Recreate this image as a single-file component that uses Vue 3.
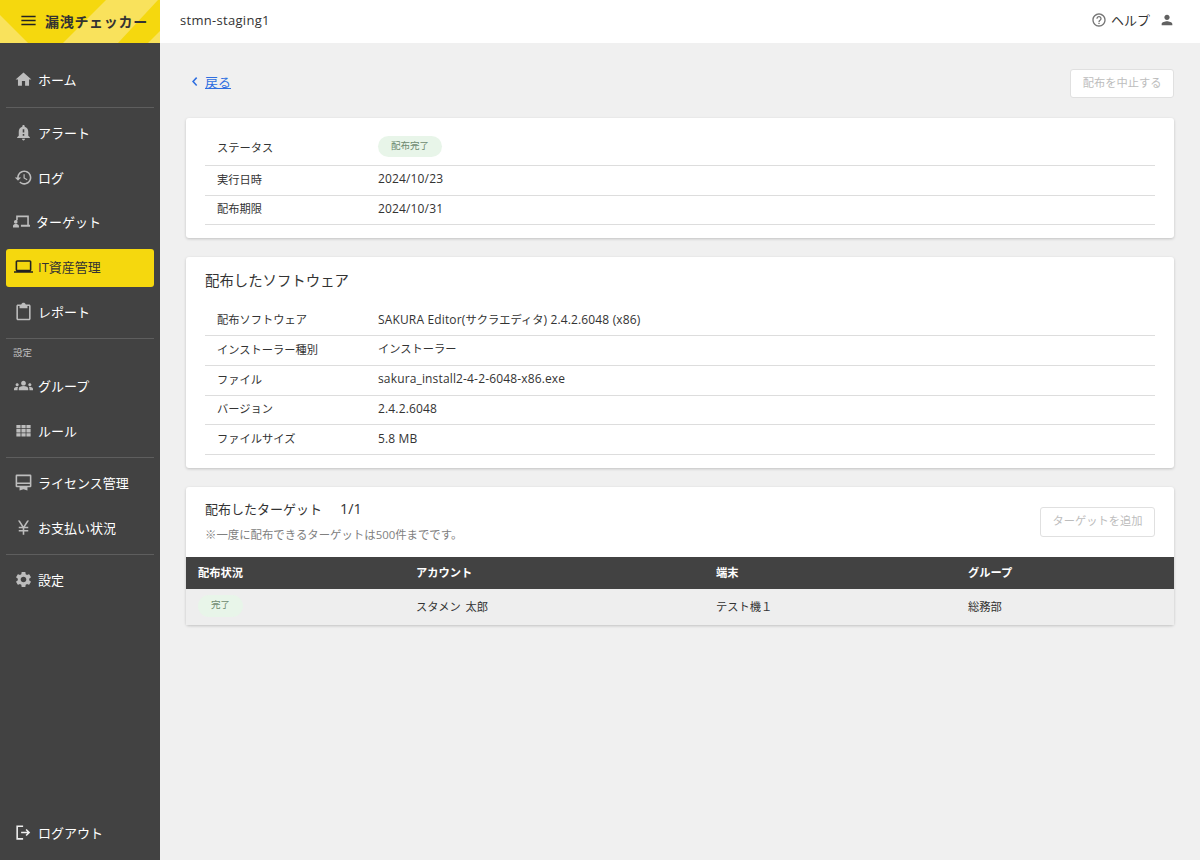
<template>
  <div class="layout">
    <aside class="sidebar">
      <div class="brand">
        <svg class="brand-bg" viewBox="0 0 160 43" preserveAspectRatio="none">
          <polygon points="0,15 28,43 0,43" fill="#f9e25c" />
          <polygon points="106,0 158,0 118,43 63,43" fill="#f9e25c" />
          <polygon points="160,31 160,43 148,43" fill="#f9e25c" />
        </svg>
        <svg class="brand-menu" viewBox="0 0 24 24"><path :d="icons.menu" /></svg>
        <span class="brand-name">漏洩チェッカー</span>
      </div>
      <nav class="nav">
        <div v-for="(group, i) in groups" :key="i" class="nav-group">
          <div v-if="group.title" class="nav-title">{{ group.title }}</div>
          <a
            v-for="item in group.items"
            :key="item.label"
            class="nav-item"
            :class="{ active: item.active, tight: item.icon === 'target' }"
          >
            <svg class="nav-icon" viewBox="0 0 24 24"><path :d="icons[item.icon]" /></svg>
            <span>{{ item.label }}</span>
          </a>
        </div>
      </nav>
      <a class="nav-item logout">
        <svg class="nav-icon" viewBox="0 0 24 24"><path :d="icons.logout" /></svg>
        <span>ログアウト</span>
      </a>
    </aside>

    <div class="body">
      <header class="topbar">
        <span class="tenant">stmn-staging1</span>
        <div class="top-right">
          <svg class="help-icon" viewBox="0 0 24 24"><path :d="icons.help" /></svg>
          <span class="help">ヘルプ</span>
          <svg class="user-icon" viewBox="0 0 24 24"><path :d="icons.person" /></svg>
        </div>
      </header>

      <main class="main">
        <div class="back-row">
          <a class="back">
            <svg viewBox="0 0 8 12"><path d="M7 1.5 5.5 0 0 6l5.5 6L7 10.5 2.8 6z" /></svg>
            <span>戻る</span>
          </a>
          <button class="btn" disabled>配布を中止する</button>
        </div>

        <section class="card">
          <div v-for="row in summary" :key="row.label" class="row" :class="{ tall: row.badge }">
            <div class="row-label">{{ row.label }}</div>
            <div class="row-value">
              <span v-if="row.badge" class="badge">{{ row.value }}</span>
              <template v-else>{{ row.value }}</template>
            </div>
          </div>
        </section>

        <section class="card">
          <h2 class="card-title">配布したソフトウェア</h2>
          <div v-for="row in software" :key="row.label" class="row">
            <div class="row-label">{{ row.label }}</div>
            <div class="row-value">
              <span v-for="(part, i) in splitText(row.value)" :key="i" :class="{ jp: i % 2 === 1 }">{{ part }}</span>
            </div>
          </div>
        </section>

        <section class="card card-target">
          <div class="target-head">
            <div>
              <h2 class="card-title target-title">配布したターゲット<span class="count">1/1</span></h2>
              <p class="note">※一度に配布できるターゲットは500件までです。</p>
            </div>
            <button class="btn btn-add" disabled>ターゲットを追加</button>
          </div>
          <table class="table">
            <thead>
              <tr>
                <th class="c1">配布状況</th>
                <th class="c2">アカウント</th>
                <th class="c3">端末</th>
                <th>グループ</th>
              </tr>
            </thead>
            <tbody>
              <tr>
                <td><span class="badge small">完了</span></td>
                <td>スタメン 太郎</td>
                <td>テスト機１</td>
                <td>総務部</td>
              </tr>
            </tbody>
          </table>
        </section>
      </main>
    </div>
  </div>
</template>

<script setup>
const icons = {
  menu: 'M3 18h18v-2H3v2zm0-5h18v-2H3v2zm0-7v2h18V6H3z',
  home: 'M10 20v-6h4v6h5v-8h3L12 3 2 12h3v8z',
  alert: 'M18 16v-5c0-3.07-1.64-5.64-4.5-6.32V4c0-.83-.67-1.5-1.5-1.5s-1.5.67-1.5 1.5v.68C7.63 5.36 6 7.92 6 11v5l-2 2v1h16v-1l-2-2zm-5 0h-2v-2h2v2zm0-4h-2V8h2v4zm-1 10c1.1 0 2-.9 2-2h-4c0 1.1.9 2 2 2z',
  history: 'M13 3c-4.97 0-9 4.03-9 9H1l3.89 3.89.07.14L9 12H6c0-3.87 3.13-7 7-7s7 3.13 7 7-3.13 7-7 7c-1.93 0-3.68-.79-4.94-2.06l-1.42 1.42C8.27 19.99 10.51 21 13 21c4.97 0 9-4.03 9-9s-4.03-9-9-9zm-1 5v5l4.28 2.54.72-1.21-3.5-2.08V8H12z',
  target: 'M4 4.5h16v11.5h1.5v2.5H10V16h8V6.5H6v4H4v-6zM3.5 10.2a2.3 2.3 0 1 1 0 4.6 2.3 2.3 0 0 1 0-4.6zM0 17.6c0-1.6 2-2.4 3.5-2.4S7.5 16 7.5 17.6v2H0v-2z',
  laptop: 'M20 18c1.1 0 1.99-.9 1.99-2L22 6c0-1.1-.9-2-2-2H4c-1.1 0-2 .9-2 2v10c0 1.1.9 2 2 2H0v2h24v-2h-4zM4 6h16v10H4V6z',
  report: 'M19 3h-4.18C14.4 1.84 13.3 1 12 1s-2.4.84-2.82 2H5c-1.1 0-2 .9-2 2v16c0 1.1.9 2 2 2h14c1.1 0 2-.9 2-2V5c0-1.1-.9-2-2-2zM19 21H5V5h2v3h10V5h2v16z',
  groups: 'M12 12.75c1.63 0 3.07.39 4.24.9 1.08.48 1.76 1.56 1.76 2.73V18H6v-1.61c0-1.18.68-2.26 1.76-2.73 1.17-.52 2.61-.91 4.24-.91zM4 13c1.1 0 2-.9 2-2s-.9-2-2-2-2 .9-2 2 .9 2 2 2zm1.13 1.1c-.37-.06-.74-.1-1.13-.1-.99 0-1.93.21-2.78.58C.48 14.9 0 15.62 0 16.43V18h4.5v-1.61c0-.83.23-1.61.63-2.29zM20 13c1.1 0 2-.9 2-2s-.9-2-2-2-2 .9-2 2 .9 2 2 2zm4 3.43c0-.81-.48-1.53-1.22-1.85-.85-.37-1.79-.58-2.78-.58-.39 0-.76.04-1.13.1.4.68.63 1.46.63 2.29V18H24v-1.57zM12 6c1.66 0 3 1.34 3 3s-1.34 3-3 3-3-1.34-3-3 1.34-3 3-3z',
  grid: 'M3 5h5.3v4.2H3zM9.4 5h5.3v4.2H9.4zM15.7 5H21v4.2h-5.3zM3 10.2h5.3v4.2H3zM9.4 10.2h5.3v4.2H9.4zM15.7 10.2H21v4.2h-5.3zM3 15.4h5.3v4.2H3zM9.4 15.4h5.3v4.2H9.4zM15.7 15.4H21v4.2h-5.3z',
  license: 'M3.5 2h17A1.5 1.5 0 0 1 22 3.5v13a1.5 1.5 0 0 1-1.5 1.5H17v4l-5-1.5L7 22v-4H3.5A1.5 1.5 0 0 1 2 16.5v-13A1.5 1.5 0 0 1 3.5 2zM4 4v8h16V4H4zm0 10v2h16v-2H4z',
  yen: 'M13.92 11H18v2h-5v2h5v2h-5v4h-2v-4H6v-2h5v-2H6v-2h4.08L5 3h2.37L12 10.29 16.63 3H19z',
  settings: 'M19.14 12.94c.04-.3.06-.61.06-.94 0-.32-.02-.64-.07-.94l2.03-1.58c.18-.14.23-.41.12-.61l-1.92-3.32c-.12-.22-.37-.29-.59-.22l-2.39.96c-.5-.38-1.03-.7-1.62-.94l-.36-2.54c-.04-.24-.24-.41-.48-.41h-3.84c-.24 0-.43.17-.47.41l-.36 2.54c-.59.24-1.13.57-1.62.94l-2.39-.96c-.22-.08-.47 0-.59.22L2.74 8.87c-.12.21-.08.47.12.61l2.03 1.58c-.05.3-.09.63-.09.94s.02.64.07.94l-2.03 1.58c-.18.14-.23.41-.12.61l1.92 3.32c.12.22.37.29.59.22l2.39-.96c.5.38 1.03.7 1.62.94l.36 2.54c.05.24.24.41.48.41h3.84c.24 0 .44-.17.47-.41l.36-2.54c.59-.24 1.13-.56 1.62-.94l2.39.96c.22.08.47 0 .59-.22l1.92-3.32c.12-.22.07-.47-.12-.61l-2.01-1.58zM12 15.6c-1.98 0-3.6-1.62-3.6-3.6s1.62-3.6 3.6-3.6 3.6 1.62 3.6 3.6-1.62 3.6-3.6 3.6z',
  logout: 'M3 3h8.5v2H5v14h6.5v2H3V3zM16 7.5l4.5 4.5-4.5 4.5-1.4-1.4 2.1-2.1H9v-2h7.7l-2.1-2.1L16 7.5z',
  help: 'M11 18h2v-2h-2v2zm1-16C6.48 2 2 6.48 2 12s4.48 10 10 10 10-4.48 10-10S17.52 2 12 2zm0 18c-4.41 0-8-3.59-8-8s3.59-8 8-8 8 3.59 8 8-3.59 8-8 8zm0-14c-2.21 0-4 1.79-4 4h2c0-1.1.9-2 2-2s2 .9 2 2c0 2-3 1.75-3 5h2c0-2.25 3-2.5 3-5 0-2.21-1.79-4-4-4z',
  person: 'M12 12c2.21 0 4-1.79 4-4s-1.79-4-4-4-4 1.79-4 4 1.79 4 4 4zm0 2c-2.67 0-8 1.34-8 4v2h16v-2c0-2.66-5.33-4-8-4z',
}

const groups = [
  { items: [{ label: 'ホーム', icon: 'home' }] },
  {
    items: [
      { label: 'アラート', icon: 'alert' },
      { label: 'ログ', icon: 'history' },
      { label: 'ターゲット', icon: 'target' },
      { label: 'IT資産管理', icon: 'laptop', active: true },
      { label: 'レポート', icon: 'report' },
    ],
  },
  {
    title: '設定',
    items: [
      { label: 'グループ', icon: 'groups' },
      { label: 'ルール', icon: 'grid' },
    ],
  },
  {
    items: [
      { label: 'ライセンス管理', icon: 'license' },
      { label: 'お支払い状況', icon: 'yen' },
    ],
  },
  { items: [{ label: '設定', icon: 'settings' }] },
]

const summary = [
  { label: 'ステータス', value: '配布完了', badge: true },
  { label: '実行日時', value: '2024/10/23' },
  { label: '配布期限', value: '2024/10/31' },
]

const software = [
  { label: '配布ソフトウェア', value: 'SAKURA Editor(サクラエディタ) 2.4.2.6048 (x86)' },
  { label: 'インストーラー種別', value: 'インストーラー' },
  { label: 'ファイル', value: 'sakura_install2-4-2-6048-x86.exe' },
  { label: 'バージョン', value: '2.4.2.6048' },
  { label: 'ファイルサイズ', value: '5.8 MB' },
]

// odd parts are the Japanese runs, they are set a little smaller than latin
function splitText(text) {
  return text.split(/([\u3000-\u30ff\u4e00-\u9fff]+)/)
}
</script>

<style>
html,
body {
  margin: 0;
  background: #f0f0f0;
}
</style>

<style scoped>
.layout {
  display: flex;
  height: 860px;
  font-family: "Open Sans", "Noto Sans CJK JP", sans-serif;
  font-size: 12px;
  color: #333;
  overflow: hidden;
}
.sidebar {
  width: 160px;
  flex-shrink: 0;
  display: flex;
  flex-direction: column;
  background: #424242;
  color: #fff;
}
.brand {
  position: relative;
  height: 43px;
  box-sizing: border-box;
  display: flex;
  align-items: center;
  padding: 0 0 2px 19px;
  background: #f5d80e;
  color: #333;
}
.brand-bg {
  position: absolute;
  inset: 0;
  width: 100%;
  height: 100%;
}
.brand-menu {
  position: relative;
  width: 19px;
  height: 19px;
  fill: #222;
  margin-right: 7px;
}
.brand-name {
  position: relative;
  font-size: 14px;
  font-weight: 700;
  letter-spacing: 0.7px;
}
.nav {
  padding-top: 11.75px;
}
.nav-group {
  margin: 0 6px;
  padding-top: 6.25px;
  border-bottom: 1px solid #5e5e5e;
}
.nav-group:first-child {
  padding-bottom: 1.25px;
}
.nav-group:last-child {
  border-bottom: 0;
}
.nav-title {
  margin: 1px 0 7.5px 7px;
  font-size: 9.5px;
  line-height: 14px;
  color: #bdbdbd;
}
.nav-item {
  height: 38px;
  box-sizing: border-box;
  margin-bottom: 6.75px;
  display: flex;
  align-items: center;
  gap: 5.5px;
  padding: 0 0 2px 7.5px;
  border-radius: 3px;
  font-size: 13px;
  color: #fff;
}
.nav-item.tight {
  gap: 4px;
  padding-left: 7px;
}
.nav-icon {
  width: 19px;
  height: 19px;
  fill: #bdbdbd;
  flex-shrink: 0;
}
.nav-item.active {
  background: #f5d80e;
  color: #333;
}
.nav-item.active .nav-icon {
  fill: #222;
}
.logout {
  margin: auto 6px 8px;
}
.logout .nav-icon {
  fill: #eee;
}
.body {
  flex: 1;
  min-width: 0;
  display: flex;
  flex-direction: column;
  background: #f0f0f0;
}
.topbar {
  height: 43px;
  flex-shrink: 0;
  background: #fff;
  display: flex;
  align-items: center;
  justify-content: space-between;
  padding: 0 25px 3px 20px;
  box-sizing: border-box;
}
.tenant {
  font-size: 13px;
  letter-spacing: 0.3px;
}
.top-right {
  display: flex;
  align-items: center;
}
.help-icon {
  width: 16px;
  height: 16px;
  fill: #757575;
  margin-right: 4px;
}
.help {
  font-size: 13px;
  margin: 0 9px 2px 0;
}
.user-icon {
  width: 16px;
  height: 16px;
  fill: #616161;
}
.main {
  padding: 26px 26px 0;
}
.back-row {
  display: flex;
  align-items: center;
  justify-content: space-between;
  margin-bottom: 20px;
}
.back {
  display: flex;
  align-items: center;
  padding-bottom: 5px;
  color: #2f6fe0;
  font-size: 13px;
}
.back svg {
  width: 6px;
  height: 9px;
  fill: #2f6fe0;
  margin: 1px 7px 0 6px;
}
.back span {
  text-decoration: underline;
}
.btn {
  height: 29px;
  padding: 0 11.5px 3px;
  border: 1px solid #e0e0e0;
  border-radius: 3px;
  background: #fff;
  color: #bdbdbd;
  font: inherit;
  font-size: 11.25px;
}
.btn-add {
  height: 30px;
  margin-top: 8px;
}
.card {
  background: #fff;
  border-radius: 3px;
  box-shadow: 0 1px 3px rgba(0, 0, 0, 0.2);
  padding: 14px 19px 13px;
  margin-bottom: 18.75px;
}
.card-title {
  margin: 0 0 15.25px;
  font-size: 14.4px;
  font-weight: 400;
  line-height: 20px;
}
.row {
  display: flex;
  align-items: center;
  height: 29.75px;
  box-sizing: border-box;
  padding-bottom: 3px;
  border-bottom: 1px solid #ddd;
}
.row.tall {
  height: 33.75px;
}
.row-label {
  width: 161px;
  padding-left: 12px;
  flex-shrink: 0;
  font-size: 11.25px;
}
.row-value {
  letter-spacing: 0.15px;
}
.jp {
  font-size: 11.25px;
  letter-spacing: 0;
}
.badge {
  display: inline-block;
  height: 21px;
  line-height: 19px;
  padding: 0 13px;
  border-radius: 11px;
  background: #e8f5e9;
  color: #6d8a6f;
  font-size: 9.5px;
  letter-spacing: 0;
}
.badge.small {
  height: 22px;
  line-height: 19px;
  vertical-align: middle;
}
.card-target {
  padding: 0;
}
.target-head {
  height: 70px;
  box-sizing: border-box;
  display: flex;
  justify-content: space-between;
  align-items: flex-start;
  padding: 12px 19px 0;
}
.target-title {
  margin-bottom: 7px;
  font-size: 13px;
}
.count {
  margin-left: 18px;
  font-size: 14.4px;
}
.note {
  margin: 0;
  font-size: 11.4px;
  color: #808080;
  line-height: 18px;
}
.table {
  width: 100%;
  border-collapse: collapse;
  table-layout: fixed;
  font-size: 11.25px;
}
.table th {
  box-sizing: border-box;
  height: 32px;
  padding: 0 12px 1px;
  background: #424242;
  color: #fff;
  font-weight: 700;
  text-align: left;
}
.table td {
  box-sizing: border-box;
  height: 36px;
  padding: 0 12px 2px;
  background: #eee;
  word-spacing: 2px;
}
.c1 {
  width: 218px;
}
.c2 {
  width: 300px;
}
.c3 {
  width: 252px;
}
</style>
